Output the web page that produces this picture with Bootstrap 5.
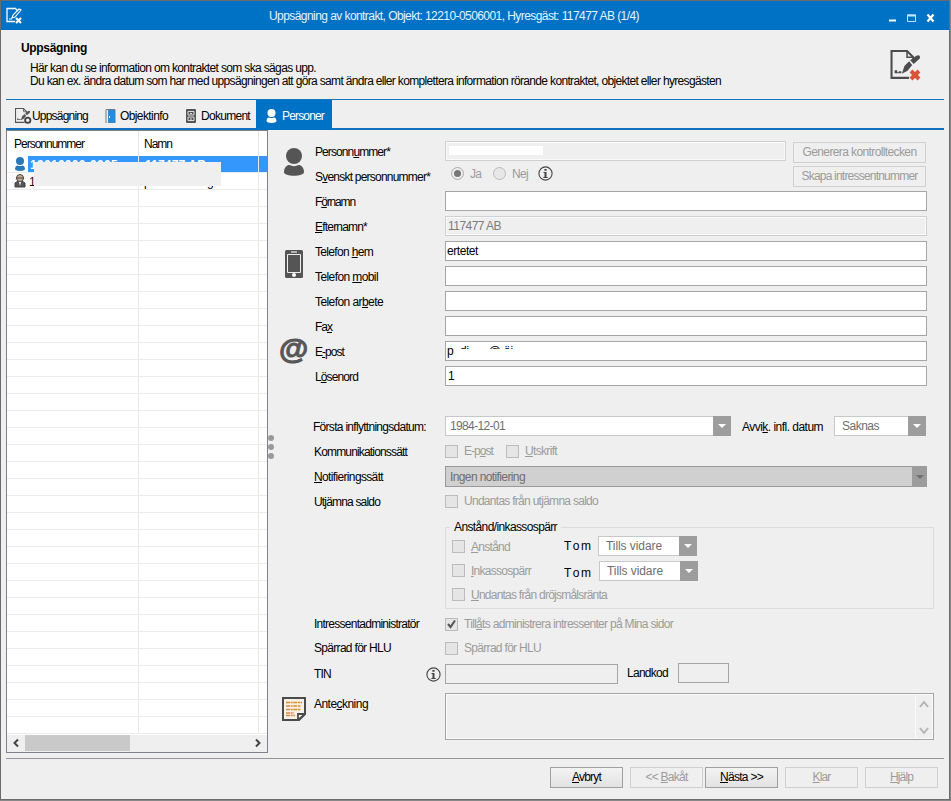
<!DOCTYPE html>
<html lang="sv">
<head>
<meta charset="utf-8">
<meta name="viewport" content="width=device-width, initial-scale=1">
<title>Uppsägning av kontrakt</title>
<link href="https://cdn.jsdelivr.net/npm/bootstrap@5.3.0/dist/css/bootstrap.min.css" rel="stylesheet">
<style>
html,body{height:801px;overflow:hidden}
body{font:12px/20px "Liberation Sans",Arial,sans-serif;color:#000;background:#888;letter-spacing:-.8px}
svg{display:block;flex:none}
.win{width:950px;height:800px;background:#efefef;border:1px solid #6b6b6b}
.titlebar{height:29px;background:#0072c6;color:#e4f3ff;padding:0 14px 0 5px}
.caption{padding-left:247px}
.head{height:69px;padding:9px 25px 0 20px;line-height:13px}
.head h1{font-size:12px;line-height:18px;font-weight:700;margin:0 0 5px}
.head p{margin:0 0 0 9px}
.tabs{height:31px;margin:0 5px;border-top:1px solid #1177bd;border-bottom:2px solid #0f6fc0}
.tabs .nav-link{color:#000;padding:2px 0 0;height:30px;font-size:12px;border-radius:0;display:flex;align-items:center}
.tabs .on{background:#0072c6;color:#fff}
.main{height:623px;padding-left:5px}
.list{width:262px;height:623px;border:1px solid #7c8288;background:#fff;position:relative}
.lh{height:25px;line-height:26px}
.lh>div,.lr>div{border-right:1px solid #e8e8e8;flex:none}
.c1{width:132px}.c2{width:120px}
.lr{height:17px;border-bottom:1px solid #ebebeb;line-height:18px}
.lr .c1 svg{margin:1px 0 0 7px}
.sel{background:linear-gradient(90deg,#fff 21px,#3397fb 21px);color:#fff}
.veil{position:absolute;left:27px;top:31px;width:187px;height:24px;background:#efefef}
.hs{height:17px;background:#efefef;margin-top:1px}
.hs i{width:105px;height:16px;background:#c9c9c9}
.split{width:7px;padding-top:305px}
.split i{width:6px;height:6px;border-radius:50%;background:#999;margin-bottom:3px}
.icons{width:40px;padding:18px 0 0 5px}
.at{font:bold 30px/28px "Liberation Sans",sans-serif;color:#575757;-webkit-text-stroke:1px #575757;letter-spacing:0;height:28px;margin:57px 0 0 -1px;width:30px}
.r{height:25px;display:flex;align-items:flex-start;padding-top:0}
.lb{width:130px;line-height:22px;flex:none}
.lb.l2{position:relative;left:-1px}
.form{width:630px;padding-top:11px}
.tx{height:20px;border:1px solid #a5a5a5;background:#fff;width:482px;padding:0 2px;line-height:18px;flex:none}
.dis{background:#efefef;border-color:#d0d0d0;box-shadow:inset 0 0 0 1px #fafafa;color:#7c7c7c}
.g{color:#9b9b9b}
.bt{height:21px;border:1px solid #d0d0d0;border-radius:0;padding:0;font-size:12px;line-height:19px;color:#9b9b9b;background:#efefef;letter-spacing:inherit;text-align:center;flex:none}
.bt.act{color:#000;border-color:#a0a0a0;background:linear-gradient(#f3f3f3,#e2e2e2)}
.gen{width:133px}
.ck{width:13px;height:13px;border:1px solid #bcbcbc;background:#e5e5e5;flex:none;margin-right:6px}
.dd{height:20px;border:1px solid #c8c8c8;background:#fff;color:#6e6e6e;display:flex;justify-content:space-between;line-height:18px;flex:none}
.ar{width:18px;height:20px;margin:-1px;background:#9d9d9d;display:flex;align-items:center;justify-content:center}
.ar::after{content:"";border:4px solid transparent;border-top:4px solid #fff;border-bottom:0}
.dark{width:482px;height:21px;background:#d0d0d0;border-color:#999;line-height:20px}
.dark .ar{width:15px;height:21px}.dark .ar::after{border-top-color:#707070}
.grp{width:489px;height:89px;border:1px solid #dcdcdc;margin:4px 0 0 130px;padding:0 6px}
.grp legend{font-size:12px;line-height:14px;height:14px;float:none;width:auto;margin:-7px 0 0 -2px;padding:0 4px;background:#efefef;display:table}
.area{width:489px;height:47px;border:1px solid #a5a5a5;box-shadow:inset 0 0 0 1px #fafafa;flex:none}
.area div{width:18px;border-left:1px solid #fafafa}
.blank{position:absolute;left:9px;top:7px;width:80px;height:10px;background:#fff}
.foot{height:41px;margin:0 5px;padding:8px 6px 0 0;border-top:1px solid #949494}
.foot .bt{width:73px}
u{text-underline-offset:1px;text-decoration-thickness:1px}
[data-w]{display:inline-block;white-space:pre;flex:none}
</style>
<script src="https://cdn.jsdelivr.net/npm/bootstrap@5.3.0/dist/js/bootstrap.bundle.min.js"></script>
</head>
<body>
<svg width="0" height="0" class="position-absolute">
<defs>
<symbol id="person" viewBox="0 0 20 28"><ellipse cx="10" cy="8" rx="8" ry="8"/><path d="M0 24C0 18.500 4 16.500 5.500 17C8 18.500 12 18.500 14.500 17C16 16.500 20 18.500 20 24C20 29 0 29 0 24z"/></symbol>
<symbol id="info" viewBox="0 0 15 15"><circle cx="7.500" cy="7.500" r="6.600" fill="none" stroke="#444" stroke-width="1.100"/><path d="M6.400 3h2.200v1.800H6.400zM5.500 6h3v5h1.200v1h-4.400v-1h1.200V7h-1z" fill="#444"/></symbol>
<symbol id="doc" viewBox="0 0 30 30"><path d="M22 9V7L16 1H1V27H18" fill="none" stroke="currentColor" stroke-width="2"/><path d="M16 1v6h5" fill="none" stroke="currentColor" stroke-width="1.500"/><path d="M11 23L13.500 15.500 18 11 21 14.500 16.500 20zM19 10L25 5.500Q29 4 28.500 8L22.500 13.500z" fill="currentColor"/><path d="M4 19.500v3h6.500v-2H8v1H6.500v-2z" fill="currentColor"/></symbol>
</defs></svg>
<div class="win">
 <div class="titlebar d-flex align-items-center">
  <svg width="16" height="17" viewBox="0 0 16 17"><path d="M10 1.500H1v13h8M9 1l3 3" fill="none" stroke="#fff" stroke-width="1.300"/><path d="M6 11l1-3 6-6 2 1-6 7zM3 12h3" stroke="#fff" fill="none" stroke-width="1.100"/><path d="M10 11l5 5M15 11l-5 5" stroke="#fff" stroke-width="2"/></svg>
  <div class="flex-grow-1 caption"><span data-w="370">Uppsägning av kontrakt, Objekt: 12210-0506001, Hyresgäst: 117477 AB (1/4)</span></div>
  <svg width="46" height="10" viewBox="0 0 46 10" class="mt-1"><path d="M0 6.500h7v2H0z" fill="#fff"/><path d="M18.500 2h8v6.500h-8z" fill="none" stroke="#bfe4ff"/><path d="M18 1.500h9v2h-9z" fill="#bfe4ff"/><path d="M38.500 1.500l6 7M44.500 1.500l-6 7" stroke="#fff" stroke-width="2.200"/></svg>
 </div>
 <div class="head d-flex justify-content-between">
  <div><h1><span data-w="66">Uppsägning</span></h1>
  <p><span data-w="286">Här kan du se information om kontraktet som ska sägas upp.</span></p>
  <p><span data-w="691">Du kan ex. ändra datum som har med uppsägningen att göra samt ändra eller komplettera information rörande kontraktet, objektet eller hyresgästen</span></p></div>
  <svg width="34" height="34" viewBox="0 0 34 34" style="color:#4c4c4c;margin-top:11px"><use href="#doc" width="32" height="31"/><path d="M21 21l8 8M29 21l-8 8" stroke="#d95338" stroke-width="4"/></svg>
 </div>
 <nav class="tabs nav flex-nowrap">
  <a class="nav-link" style="padding-left:9px;width:99px"><svg width="17" height="16" viewBox="0 0 32 30" style="color:#555"><use href="#doc" width="30" height="30"/><circle cx="24" cy="23" r="5" fill="#efefef" stroke="#444" stroke-width="3.500"/></svg><span data-w="56">Uppsägning</span></a>
  <a class="nav-link" style="width:79px"><svg width="12" height="14" viewBox="0 0 12 14" style="margin-right:3px"><path d="M1 14V.5h9V14" fill="none" stroke="#777"/><path d="M3 1h7v13H3z" fill="#278bdc"/><path d="M4.500 7v2" stroke="#fff"/></svg><span data-w="48">Objektinfo</span></a>
  <a class="nav-link" style="width:72px;padding-left:2px"><svg width="10" height="14" viewBox="0 0 10 14" style="margin-right:5px"><rect width="10" height="14" rx="1" fill="#555"/><path d="M2 2.500h6v3.500H2zM2 8h6v3.500H2z" fill="none" stroke="#ddd"/><path d="M4 4.500h2M4 10h2" stroke="#ddd"/></svg><span data-w="49">Dokument</span></a>
  <a class="nav-link on" style="width:76px;padding-left:10px"><svg width="11" height="14" fill="#fff" style="margin-right:5px"><use href="#person"/></svg><span data-w="42">Personer</span></a>
 </nav>
 <div class="main d-flex">
  <div class="list">
   <div class="lh d-flex"><div class="c1" style="padding-left:7px"><span data-w="70">Personnummer</span></div><div class="c2" style="padding-left:5px"><span data-w="28">Namn</span></div></div>
   <div class="lr sel d-flex"><div class="c1 d-flex"><svg width="12" height="14" fill="#2878b8"><use href="#person"/></svg><span class="fw-bold" style="margin-left:4px" data-w="88">19010000-0005</span></div><div class="c2" style="padding-left:6px"><span class="fw-bold" data-w="61">117477 AB</span></div></div>
   <div class="lr d-flex"><div class="c1 d-flex"><svg width="12" height="14" viewBox="0 0 12 14"><circle cx="6" cy="4" r="3.500" fill="#c9ac91" stroke="#444"/><path d="M2 4h8M1 13V9l3-2 2 3 2-3 3 2v4z" fill="#555" stroke="#444"/><path d="M5 8h2l-1 4z" fill="#fff"/></svg><span style="margin-left:3px;color:#400">1</span></div><div class="c2" style="padding-left:5px"><span data-w="70">persontiding</span></div></div>
   <div id="rows"></div>
   <div class="veil"></div>
   <div class="hs d-flex"><svg width="18" height="16" viewBox="0 0 18 16"><path d="M11 4.500L7.500 8l3.500 3.500" fill="none" stroke="#444" stroke-width="2"/></svg><i></i><svg class="ms-auto" width="18" height="16" viewBox="0 0 18 16"><path d="M7 4.500L10.500 8 7 11.500" fill="none" stroke="#444" stroke-width="2"/></svg></div>
  </div>
  <div class="split"><i class="d-block"></i><i class="d-block"></i><i class="d-block"></i></div>
  <div class="icons">
   <svg width="20" height="28" fill="#555" style="margin-left:4px"><use href="#person"/></svg>
   <svg width="18" height="28" viewBox="0 0 18 28" style="margin:74px 0 0 5px"><rect width="18" height="28" rx="1.500" fill="#555"/><path d="M2.500 4.500h13v18h-13z" fill="none" stroke="#eee"/><path d="M6 2h6" stroke="#eee" stroke-width="1.200"/><circle cx="9" cy="25" r="2" fill="#fff"/></svg>
   <div class="at">@</div>
   <svg width="24" height="24" viewBox="0 0 24 24" style="margin:334px 0 0 2px"><path d="M1 1h22v16l-6 6H1z" fill="#f7f2e9" stroke="#4b4b4b" stroke-width="2"/><path d="M16 23v-6h7z" fill="#fff" stroke="#4b4b4b" stroke-width="1.800"/><path d="M4 5.500h16M4 9h15M4 12.500h15M4 16h8M4 18.500h9" stroke="#d98a2c" stroke-width="1.600" stroke-dasharray="4 .7 2 .6"/></svg>
  </div>
  <div class="form">
   <div class="r"><div class="lb"><span data-w="75">Personn<u>u</u>mmer*</span></div><div class="tx dis" style="width:341px;padding-top:4px"><div style="width:94px;height:9px;background:#fff;margin-left:1px"></div></div><button class="bt btn gen" style="margin:1px 0 0 7px"><span data-w="114">Generera kontrolltecken</span></button></div>
   <div class="r"><div class="lb"><span data-w="115">S<u>v</u>enskt personnummer*</span></div>
    <div class="d-flex align-items-center g" style="width:348px;height:24px;padding:1px 0 0 6px;margin-top:-5px"><svg width="13" height="13" style="margin-right:6px"><circle cx="6.500" cy="6.500" r="6" fill="#eee" stroke="#aaa"/><circle cx="6.500" cy="6.500" r="3.500" fill="#777"/></svg><span data-w="11">Ja</span><svg width="13" height="13" style="margin:0 6px 0 12px"><circle cx="6.500" cy="6.500" r="6" fill="#e7e7e7" stroke="#bbb"/></svg><span data-w="16">Nej</span><svg width="15" height="15" style="margin-left:10px"><use href="#info"/></svg></div>
    <button class="bt btn gen"><span data-w="116">Skapa intressentnummer</span></button></div>
   <div class="r"><div class="lb"><span data-w="40">F<u>ö</u>rnamn</span></div><div class="tx"></div></div>
   <div class="r"><div class="lb"><span data-w="52"><u>E</u>fternamn*</span></div><div class="tx dis"><span data-w="53">117477 AB</span></div></div>
   <div class="r"><div class="lb"><span data-w="58">Telefon <u>h</u>em</span></div><div class="tx" style="padding-left:1px"><span data-w="31">ertetet</span></div></div>
   <div class="r"><div class="lb"><span data-w="63">Telefon <u>m</u>obil</span></div><div class="tx"></div></div>
   <div class="r"><div class="lb"><span data-w="68">Telefon ar<u>b</u>ete</span></div><div class="tx"></div></div>
   <div class="r"><div class="lb"><span data-w="17">Fa<u>x</u></span></div><div class="tx"></div></div>
   <div class="r"><div class="lb"><span data-w="29">E<u>-</u>post</span></div><div class="tx position-relative" style="padding-left:1px"><span data-w="66">p  di      @ öi</span><div class="blank"></div></div></div>
   <div class="r" style="height:50px"><div class="lb"><span data-w="43">L<u>ö</u>senord</span></div><div class="tx">1</div></div>
   <div class="r"><div class="lb l2" style="left:-2px"><span data-w="113">Första inflyttningsdatum:</span></div><div class="dd" style="width:286px;padding-left:4px"><span data-w="55">1984-12-01</span><b class="ar"></b></div><span data-w="81" style="margin:1px 11px 0">Avvi<u>k</u>. infl. datum</span><div class="dd" style="width:92px;padding-left:7px"><span data-w="37">Saknas</span><b class="ar"></b></div></div>
   <div class="r g"><div class="lb l2 text-black"><span data-w="93">Kommunikationssätt</span></div><div class="d-flex align-items-center"><i class="ck"></i><span data-w="29" style="margin-right:13px">E-p<u>o</u>st</span><i class="ck"></i><span data-w="32"><u>U</u>tskrift</span></div></div>
   <div class="r"><div class="lb l2"><span data-w="69"><u>N</u>otifieringssätt</span></div><div class="dd dark" style="padding-left:4px"><span data-w="75">Ingen notifiering</span><b class="ar"></b></div></div>
   <div class="r g"><div class="lb l2 text-black"><span data-w="66">Utjämna saldo</span></div><div class="d-flex align-items-center"><i class="ck"></i><span data-w="134">Undantas från utjämna saldo</span></div></div>
   <fieldset class="grp"><legend><span data-w="103">Anstånd/inkassospärr</span></legend>
    <div class="d-flex g" style="height:25px;margin-top:2px"><i class="ck" style="margin-top:4px"></i><span data-w="39" style="margin:1px 54px 0 0"><u>A</u>nstånd</span><span data-w="26" class="text-black">T o m</span><div class="dd" style="width:99px;padding-left:7px;margin-left:8px"><span data-w="56">Tills vidare</span><b class="ar"></b></div></div>
    <div class="d-flex g" style="height:24px"><i class="ck" style="margin-top:3px"></i><span data-w="60" style="margin:0 33px 0 0"><u>I</u>nkassospärr</span><span data-w="26" class="text-black" style="margin:2px 9px 0 0">T o m</span><div class="dd" style="width:99px;padding-left:7px"><span data-w="56">Tills vidare</span><b class="ar"></b></div></div>
    <div class="d-flex g"><i class="ck" style="margin-top:3px"></i><span data-w="136"><u>U</u>ndantas från dröjsmålsränta</span></div>
   </fieldset>
   <div class="r g" style="height:24px;margin-top:4px"><div class="lb l2 text-black"><span data-w="105">Intressentadministratör</span></div><div class="d-flex align-items-center" style="margin-top:1px"><i class="ck"><svg width="11" height="11" viewBox="0 0 11 11"><path d="M2 5l2.500 3L9 1.500" fill="none" stroke="#555" stroke-width="2"/></svg></i><span data-w="209">Till<u>å</u>ts administrera intressenter på Mina sidor</span></div></div>
   <div class="r g" style="height:26px"><div class="lb l2 text-black"><span data-w="77">Spärrad för HLU</span></div><div class="d-flex align-items-center" style="margin-top:1px"><i class="ck"></i><span data-w="77">Spärrad för HLU</span></div></div>
   <div class="r" style="height:30px"><div class="lb l2 d-flex justify-content-between" style="padding-right:3px"><span data-w="17">TIN</span><svg width="15" height="15" style="margin-top:4px"><use href="#info"/></svg></div><div class="tx" style="width:173px;background:#efefef;margin-top:1px"></div><span data-w="41" style="margin:0 10px 0 9px">Landkod</span><div class="tx" style="width:51px;background:#efefef"></div></div>
   <div class="r" style="height:48px"><div class="lb l2"><span data-w="54">Ante<u>c</u>kning</span></div><div class="area d-flex justify-content-end"><div><svg width="16" height="45" viewBox="0 0 16 45"><path d="M4 13l4-5 4 5M4 34l4 5 4-5" fill="none" stroke="#b4b4b4" stroke-width="2"/></svg></div></div></div>
  </div>
 </div>
 <div style="height:5px"></div>
 <div class="foot d-flex justify-content-end">
  <button class="bt btn act" style="margin-right:7px"><span data-w="29"><u>A</u>vbryt</span></button>
  <button class="bt btn" style="margin-right:2px"><span data-w="42">&lt;&lt; <u>B</u>akåt</span></button>
  <button class="bt btn act" style="margin-right:7px"><span data-w="43"><u>N</u>ästa &gt;&gt;</span></button>
  <button class="bt btn" style="margin-right:7px"><span data-w="18"><u>K</u>lar</span></button>
  <button class="bt btn"><span data-w="23"><u>H</u>jälp</span></button>
 </div>
</div>
<script>
// Empty grid rows of the person list
document.getElementById('rows').innerHTML = '<div class="lr d-flex"><div class="c1"></div><div class="c2"></div></div>'.repeat(32);
document.querySelectorAll('[data-w]').forEach(function (e) {
  e.style.letterSpacing = '0px';
  var w = e.getBoundingClientRect().width;
  e.style.letterSpacing = ((e.dataset.w - w) / e.textContent.length).toFixed(3) + 'px';
});
</script>
</body>
</html>
